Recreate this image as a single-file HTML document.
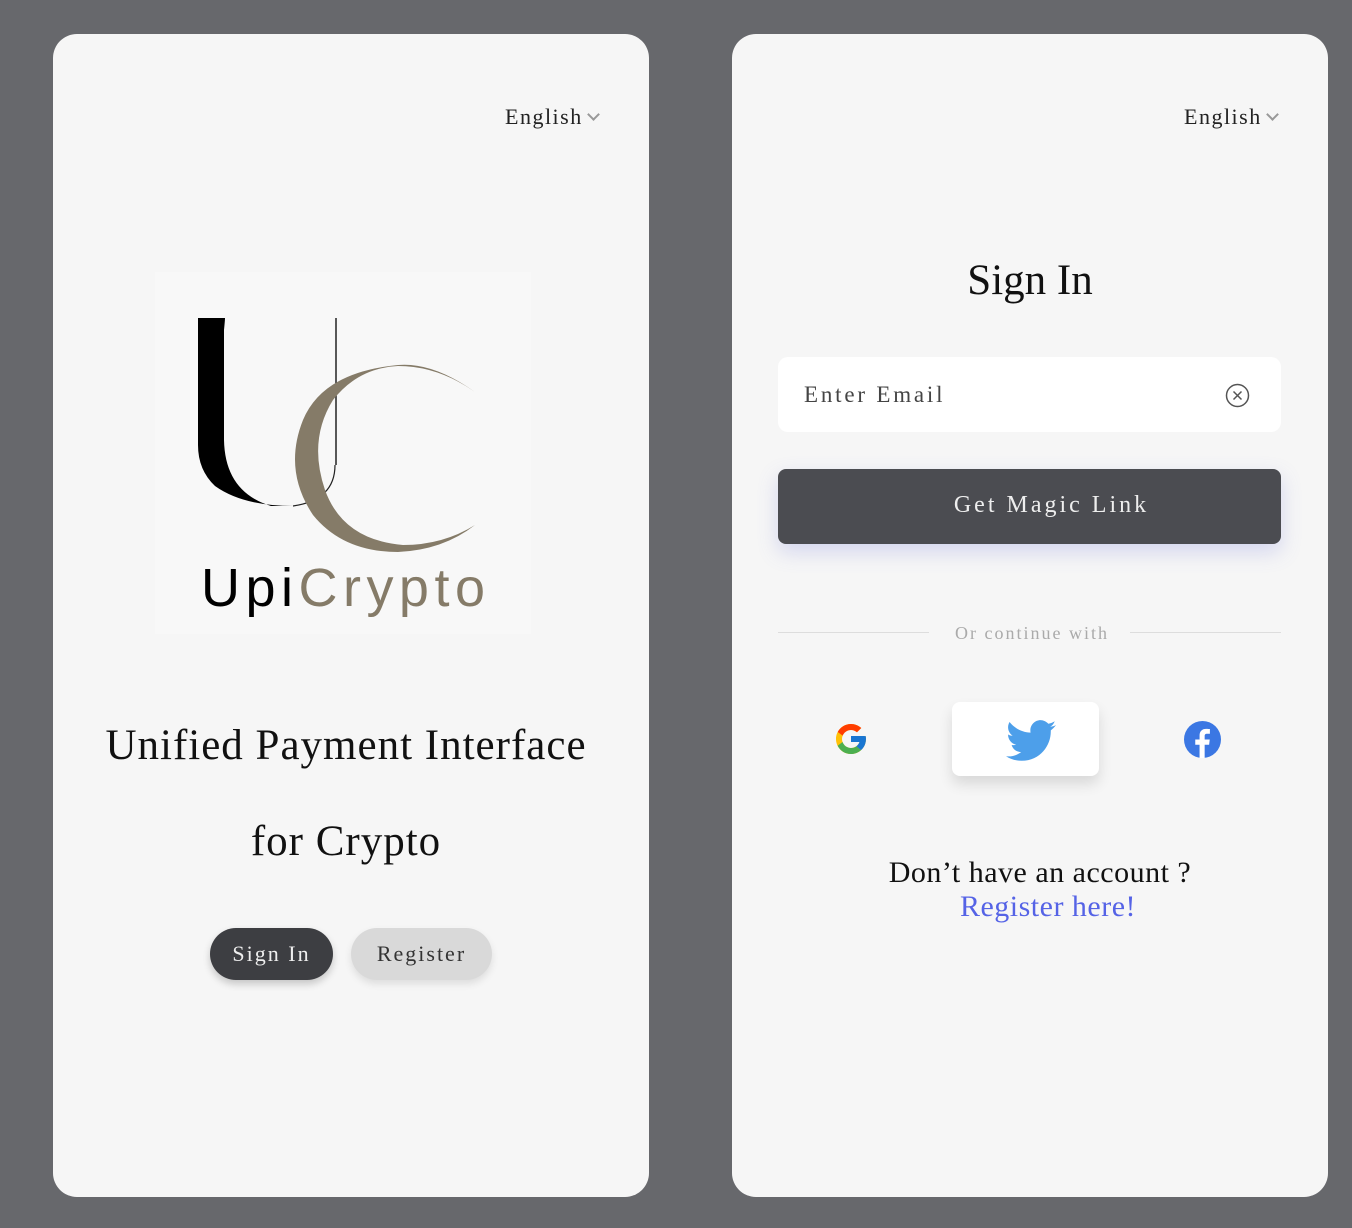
<!DOCTYPE html>
<html><head><meta charset="utf-8"><style>
body{margin:0;width:1352px;height:1228px;background:#67686c;position:relative;font-family:"Liberation Serif",serif;overflow:hidden}
.card{position:absolute;top:34px;width:596px;height:1163px;background:#f6f6f6;border-radius:24px}
.abs{position:absolute}
.lang{font-size:22px;color:#222;letter-spacing:1.5px}
.chev{display:inline-block;width:7px;height:7px;border-right:2px solid #999;border-bottom:2px solid #999;transform:rotate(45deg);margin-left:6px;position:relative;top:-5px}
</style></head><body>
<div class="card" style="left:53px">
  <div class="abs lang" style="left:452px;top:70px">English<span class="chev"></span></div>
  <div class="abs" style="left:102px;top:238px;width:376px;height:362px;background:#f8f8f8"></div>
  <svg class="abs" style="left:102px;top:238px" width="376" height="362" viewBox="152 272 376 362">
    <path d="M195 318 L222 318 Q222 320 221 330 L221 440 Q222 492 268 506 L290 506 Q240 506 212 486 Q195 470 195 445 Z" fill="#000"/>
    <line x1="333" y1="318" x2="333" y2="465" stroke="#222" stroke-width="1.5"/>
    <path d="M332 465 Q332 500 290 506" fill="none" stroke="#222" stroke-width="1.2"/>
    <path d="M472 392 Q430 362 395 365 Q320 372 300 420 Q280 470 310 515 Q340 552 395 552 Q440 550 472 525 Q440 545 400 545 Q340 540 322 490 Q305 440 330 400 Q355 368 395 366 Q435 366 472 392Z" fill="#857b68"/>
    <text x="198" y="606" font-family="Liberation Sans,sans-serif" font-size="54" textLength="284" lengthAdjust="spacing" fill="#000">Upi<tspan fill="#857b68">Crypto</tspan></text>
  </svg>
  <div class="abs" style="left:0;width:586px;top:664px;text-align:center;font-size:43px;letter-spacing:1px;color:#111;line-height:96px">Unified Payment Interface<br>for Crypto</div>
  <div class="abs" style="left:157px;top:894px;width:123px;height:52px;border-radius:26px;background:#3d3e42;color:#eee;font-size:22px;letter-spacing:2px;text-align:center;line-height:52px;box-shadow:0 4px 8px rgba(0,0,0,.2)">Sign In</div>
  <div class="abs" style="left:298px;top:894px;width:141px;height:52px;border-radius:26px;background:#d9d9d9;color:#333;font-size:22px;letter-spacing:2px;text-align:center;line-height:52px;box-shadow:0 4px 8px rgba(0,0,0,.1)">Register</div>
</div>
<div class="card" style="left:732px">
  <div class="abs lang" style="left:452px;top:70px">English<span class="chev"></span></div>
  <div class="abs" style="left:0;width:596px;top:222px;text-align:center;font-size:43px;color:#111">Sign In</div>
  <div class="abs" style="left:46px;top:323px;width:503px;height:75px;background:#fff;border-radius:10px"></div>
  <div class="abs" style="left:72px;top:348px;font-size:23px;color:#444;letter-spacing:2.8px">Enter Email</div>
  <svg class="abs" style="left:493px;top:349px" width="25" height="25" viewBox="0 0 25 25"><circle cx="12.5" cy="12.5" r="11" fill="none" stroke="#555" stroke-width="1.5"/><path d="M8.5 8.5l8 8M16.5 8.5l-8 8" stroke="#555" stroke-width="1.5"/></svg>
  <div class="abs" style="left:46px;top:435px;width:503px;height:75px;background:#4b4c51;border-radius:8px;box-shadow:0 8px 20px rgba(110,120,220,.25);color:#eee;font-size:24px;letter-spacing:3px;text-align:center;line-height:72px"><span style="position:relative;left:22px">Get Magic Link</span></div>
  <div class="abs" style="left:46px;top:598px;width:151px;border-top:1px solid #ddd"></div>
  <div class="abs" style="left:398px;top:598px;width:151px;border-top:1px solid #ddd"></div>
  <div class="abs" style="left:0;width:600px;top:589px;text-align:center;font-size:18px;color:#aaa;letter-spacing:2px">Or continue with</div>
  <svg class="abs" style="left:101px;top:687px" width="36" height="36" viewBox="0 0 48 48"><path fill="#FFC107" d="M43.6 20.1H42V20H24v8h11.3C33.7 32.7 29.2 36 24 36c-6.6 0-12-5.4-12-12s5.4-12 12-12c3.1 0 5.8 1.2 8 3l5.7-5.7C34 6.1 29.3 4 24 4 12.9 4 4 12.9 4 24s8.9 20 20 20 20-8.9 20-20c0-1.3-.1-2.6-.4-3.9z"/><path fill="#FF3D00" d="M6.3 14.7l6.6 4.8C14.7 15.1 19 12 24 12c3.1 0 5.8 1.2 8 3l5.7-5.7C34 6.1 29.3 4 24 4 16.3 4 9.7 8.3 6.3 14.7z"/><path fill="#4CAF50" d="M24 44c5.2 0 9.9-2 13.4-5.2l-6.2-5.2C29.2 35.1 26.7 36 24 36c-5.2 0-9.6-3.3-11.3-8l-6.5 5C9.5 39.6 16.2 44 24 44z"/><path fill="#1976D2" d="M43.6 20.1H42V20H24v8h11.3c-.8 2.2-2.2 4.2-4.1 5.6l6.2 5.2C37 39.2 44 34 44 24c0-1.3-.1-2.6-.4-3.9z"/></svg>
  <div class="abs" style="left:220px;top:668px;width:147px;height:74px;background:#fff;border-radius:8px;box-shadow:0 8px 14px rgba(0,0,0,.12)"></div>
  <svg class="abs" style="left:274px;top:686px" width="50" height="42" viewBox="0 0 24 20"><path fill="#4d9fea" d="M24 2.4c-.9.4-1.8.7-2.8.8 1-.6 1.8-1.6 2.2-2.7-1 .6-2 1-3.1 1.2C19.3.7 18 0 16.6 0c-2.7 0-4.9 2.2-4.9 4.9 0 .4 0 .8.1 1.1C7.7 5.8 4.1 3.9 1.7.9c-.4.7-.7 1.6-.7 2.5 0 1.7.9 3.2 2.2 4.1-.8 0-1.6-.2-2.2-.6v.1c0 2.4 1.7 4.4 3.9 4.8-.4.1-.8.2-1.3.2-.3 0-.6 0-.9-.1.6 2 2.4 3.4 4.6 3.4-1.7 1.3-3.8 2.1-6.1 2.1-.4 0-.8 0-1.2-.1 2.2 1.4 4.8 2.2 7.5 2.2 9.1 0 14-7.5 14-14v-.6c1-.7 1.8-1.6 2.5-2.5z"/></svg>
  <svg class="abs" style="left:452px;top:687px" width="37" height="37" viewBox="0 0 24 24"><circle cx="12" cy="12" r="12" fill="#3b77e3"/><path fill="#fff" d="M13.4 24v-8.6h2.9l.4-3.4h-3.3V9.9c0-1 .3-1.6 1.7-1.6h1.7V5.2c-.3 0-1.3-.1-2.5-.1-2.5 0-4.2 1.5-4.2 4.3V12H7.3v3.4h2.8V24z"/></svg>
  <div class="abs" style="left:10px;width:596px;top:822px;text-align:center;font-size:30px;letter-spacing:0.5px;color:#111;line-height:34px">Don’t have an account ?<br><span style="color:#5563e6;margin-left:16px">Register here!</span></div>
</div>
</body></html>
